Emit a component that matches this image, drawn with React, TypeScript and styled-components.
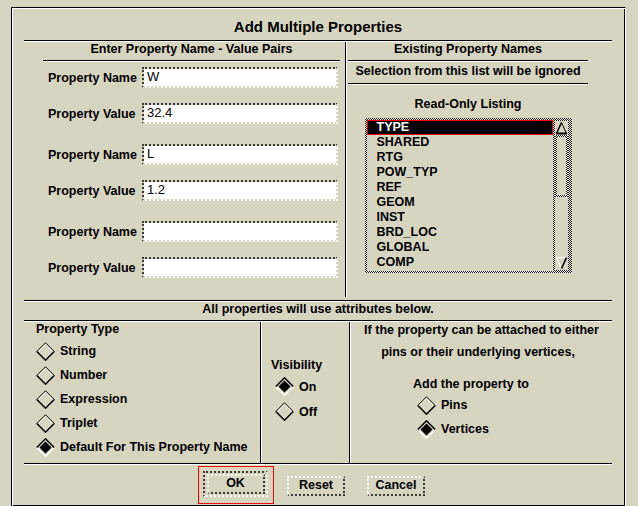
import React from "react";
import styled, { createGlobalStyle } from "styled-components";

const BG = "#d6d5c0";
const CHECKER = "repeating-conic-gradient(#1c1c1c 0 25%, #f4f4ec 0 50%) 0 0 / 2px 2px";

const Global = createGlobalStyle`
  html, body { margin: 0; padding: 0; background: ${BG}; }
  body {
    font-family: "Liberation Sans", Arial, Helvetica, sans-serif;
    color: #000;
    width: 638px;
    height: 506px;
    overflow: hidden;
  }
  * { box-sizing: border-box; }
`;

const Frame = styled.div`
  margin: 7px 0 0 11px;
  width: 615px;
  height: 500px;
  border-style: solid;
  border-width: 1px;
  border-color: #000 #fff #fff #000;
  box-shadow: inset 1px 1px 0 #fff, inset -1px -1px 0 #000;
  padding: 1px 13px 0 12px;
  display: flex;
  flex-direction: column;
`;

const Title = styled.div`
  height: 31px;
  padding-top: 9px;
  line-height: 18px;
  font-size: 15px;
  font-weight: bold;
  text-align: center;
`;

const Rule = styled.div`
  height: 2px;
  flex: none;
  border-top: 1px solid #000;
  border-bottom: 1px solid #fff;
`;

const TopSection = styled.div`
  display: flex;
  height: 258px;
`;

const LeftCol = styled.div`
  width: 321px;
  padding: 0 5px 0 19px;
  display: flex;
  flex-direction: column;
`;

const RightCol = styled.div`
  flex: 1;
  padding: 0 24px 0 1px;
  display: flex;
  flex-direction: column;
`;

const VDivider = styled.div<{ $bottomGap?: number }>`
  width: 2px;
  flex: none;
  border-left: 1px solid #000;
  border-right: 1px solid #fff;
  margin-bottom: ${(p) => p.$bottomGap ?? 0}px;
`;

const Heading = styled.div`
  height: 18px;
  line-height: 14px;
  font-size: 12.5px;
  font-weight: bold;
  text-align: center;
`;

const SubHeading = styled(Heading)`
  height: 21px;
  padding-top: 2px;
`;

const Form = styled.div`
  margin-top: 5px;
  padding-left: 5px;
  display: flex;
  flex-direction: column;
  gap: 20px;
`;

const Pair = styled.div`
  display: flex;
  flex-direction: column;
  gap: 15px;
`;

const FieldRow = styled.div`
  display: grid;
  grid-template-columns: 94px 196px;
  align-items: center;
  height: 21px;
`;

const Label = styled.span`
  font-size: 12.5px;
  font-weight: bold;
  white-space: nowrap;
`;

const TextInput = styled.input`
  width: 196px;
  height: 21px;
  margin: 0;
  border-style: dotted;
  border-width: 2px;
  border-color: #3a3a36 #fafaf4 #fafaf4 #3a3a36;
  background: #fff;
  background-clip: padding-box;
  padding: 0 0 2px 3px;
  font-family: "Liberation Sans", Arial, sans-serif;
  font-size: 13px;
  color: #000;
  outline: none;
`;

const ListingTitle = styled.div`
  margin-top: 12px;
  line-height: 14px;
  font-size: 12.5px;
  font-weight: bold;
  text-align: center;
`;

const ListBox = styled.div`
  margin: 7px auto 0;
  width: 207px;
  height: 155px;
  padding: 2px;
  background: ${CHECKER};
  display: flex;
`;

const Items = styled.div`
  flex: 1;
  background: ${BG};
  display: flex;
  flex-direction: column;
`;

const Item = styled.div<{ $selected?: boolean }>`
  height: 15px;
  line-height: 15px;
  padding-left: 10px;
  font-size: 12.5px;
  font-weight: bold;
  white-space: nowrap;
  background: ${(p) => (p.$selected ? "#000" : "transparent")};
  color: ${(p) => (p.$selected ? "#fff" : "#000")};
  box-shadow: ${(p) => (p.$selected ? "inset 0 0 0 1px #f00" : "none")};
`;

const ScrollBar = styled.div`
  width: 17px;
  flex: none;
  padding: 1px 2px;
  background: ${CHECKER};
  display: flex;
`;

const Trough = styled.div`
  flex: 1;
  background: ${BG};
  display: flex;
  flex-direction: column;
`;

const Arrow = styled.svg`
  display: block;
  flex: none;
`;

const Slider = styled.div`
  height: 62px;
  flex: none;
  padding: 2px;
  background: ${CHECKER};
  &::after {
    content: "";
    display: block;
    height: 100%;
    background: ${BG};
  }
`;

const Spacer = styled.div`
  flex: 1;
`;

const Notice = styled.div`
  height: 18px;
  line-height: 14px;
  font-size: 12.5px;
  font-weight: bold;
  text-align: center;
`;

const BottomSection = styled.div`
  display: flex;
  height: 141px;
`;

const TypeCol = styled.div`
  width: 236px;
  padding-left: 12px;
`;

const VisCol = styled.div`
  width: 87px;
  padding: 36px 0 0 9px;
`;

const AttachCol = styled.div`
  flex: 1;
`;

const GroupLabel = styled.div`
  line-height: 14px;
  font-size: 12.5px;
  font-weight: bold;
  white-space: nowrap;
`;

const RadioList = styled.div<{ $top: number; $indent?: number }>`
  margin-top: ${(p) => p.$top}px;
  margin-left: ${(p) => p.$indent ?? 0}px;
  display: flex;
  flex-direction: column;
`;

const RadioRow = styled.div<{ $h: number }>`
  height: ${(p) => p.$h}px;
  display: flex;
  align-items: center;
  gap: 5px;
  font-size: 12.5px;
  font-weight: bold;
  white-space: nowrap;
`;

const CenterLine = styled.div<{ $top?: number }>`
  margin-top: ${(p) => p.$top ?? 0}px;
  line-height: 16px;
  font-size: 12.5px;
  font-weight: bold;
  text-align: center;
  white-space: nowrap;
`;

const AddBlock = styled.div`
  margin: 17px 0 0 62px;
`;

const ButtonRow = styled.div`
  height: 40px;
  display: flex;
  align-items: flex-start;
  padding: 1px 0 0 174px;
`;

const FocusRing = styled.div`
  width: 76px;
  height: 38px;
  border: 1px solid #f00;
  padding: 4px;
`;

const DefaultFrame = styled.div`
  width: 65px;
  height: 26px;
  border-style: dotted;
  border-width: 2px;
  border-color: #3a3a36 #fafaf4 #fafaf4 #3a3a36;
  display: flex;
  align-items: center;
  justify-content: center;
`;

const Button = styled.button<{ $left?: number; $top?: number }>`
  width: 58px;
  height: 20px;
  margin: ${(p) => p.$top ?? 0}px 0 0 ${(p) => p.$left ?? 0}px;
  padding: 0 0 2px;
  border-style: dotted;
  border-width: 2px;
  border-color: #fafaf4 #3a3a36 #3a3a36 #fafaf4;
  background: ${BG};
  background-clip: padding-box;
  font-family: "Liberation Sans", Arial, sans-serif;
  font-size: 12.5px;
  font-weight: bold;
  color: #000;
  line-height: 14px;
`;

const Diamond: React.FC<{ selected?: boolean }> = ({ selected }) => (
  <svg width="19" height="19" viewBox="0 0 19 19" style={{ flex: "none" }}>
    {selected ? (
      <>
        <polyline points="0.8,9.5 9.5,18.2 18.2,9.5" fill="none" stroke="#fff" strokeWidth="1.6" />
        <polyline points="0.8,9.5 9.5,0.8 18.2,9.5" fill="none" stroke="#000" strokeWidth="1.5" />
        <polygon points="9.5,3.5 15.5,9.5 9.5,15.5 3.5,9.5" fill="#000" />
      </>
    ) : (
      <>
        <polyline points="0.8,9.5 9.5,0.8 18.2,9.5" fill="none" stroke="#000" strokeWidth="1" />
        <polyline points="0.8,9.5 9.5,18.2 18.2,9.5" fill="none" stroke="#000" strokeWidth="1.5" />
        <polyline points="2.4,9.5 9.5,2.4 16.6,9.5" fill="none" stroke="#fff" strokeWidth="0.9" />
      </>
    )}
  </svg>
);

const Radio: React.FC<{ label: string; selected?: boolean; h: number }> = ({ label, selected, h }) => (
  <RadioRow $h={h}>
    <Diamond selected={selected} />
    <span>{label}</span>
  </RadioRow>
);

const pairs = [
  { name: "W", value: "32.4" },
  { name: "L", value: "1.2" },
  { name: "", value: "" },
];

const existing = ["TYPE", "SHARED", "RTG", "POW_TYP", "REF", "GEOM", "INST", "BRD_LOC", "GLOBAL", "COMP"];

const propertyTypes = ["String", "Number", "Expression", "Triplet", "Default For This Property Name"];

export default function App() {
  return (
    <>
      <Global />
      <Frame>
        <Title>Add Multiple Properties</Title>
        <Rule />
        <TopSection>
          <LeftCol>
            <Heading>Enter Property Name - Value Pairs</Heading>
            <Rule />
            <Form>
              {pairs.map((p, i) => (
                <Pair key={i}>
                  <FieldRow>
                    <Label>Property Name</Label>
                    <TextInput readOnly value={p.name} />
                  </FieldRow>
                  <FieldRow>
                    <Label>Property Value</Label>
                    <TextInput readOnly value={p.value} />
                  </FieldRow>
                </Pair>
              ))}
            </Form>
          </LeftCol>
          <VDivider $bottomGap={3} />
          <RightCol>
            <Heading>Existing Property Names</Heading>
            <Rule />
            <SubHeading>Selection from this list will be ignored</SubHeading>
            <Rule />
            <ListingTitle>Read-Only Listing</ListingTitle>
            <ListBox>
              <Items>
                {existing.map((n, i) => (
                  <Item key={n} $selected={i === 0}>
                    {n}
                  </Item>
                ))}
              </Items>
              <ScrollBar>
                <Trough>
                  <Arrow width="13" height="14" viewBox="0 0 13 14">
                    <polyline points="1.5,12.5 6.5,1.5" fill="none" stroke="#000" strokeWidth="1.6" />
                    <polyline points="6.5,1.5 11.5,12.5" fill="none" stroke="#000" strokeWidth="1" />
                    <line x1="1" y1="12.5" x2="12" y2="12.5" stroke="#000" strokeWidth="2" />
                  </Arrow>
                  <Slider />
                  <Spacer />
                  <Arrow width="13" height="14" viewBox="0 0 13 14">
                    <line x1="1" y1="1.5" x2="12" y2="1.5" stroke="#fff" strokeWidth="1.4" />
                    <polyline points="1.5,1.5 6.5,12.5" fill="none" stroke="#fff" strokeWidth="1.2" />
                    <polyline points="6.5,12.5 11.5,1.5" fill="none" stroke="#000" strokeWidth="1.6" />
                  </Arrow>
                </Trough>
              </ScrollBar>
            </ListBox>
          </RightCol>
        </TopSection>
        <Rule />
        <Notice>All properties will use attributes below.</Notice>
        <Rule />
        <BottomSection>
          <TypeCol>
            <GroupLabel>Property Type</GroupLabel>
            <RadioList $top={3}>
              {propertyTypes.map((t, i) => (
                <Radio key={t} label={t} h={24} selected={i === propertyTypes.length - 1} />
              ))}
            </RadioList>
          </TypeCol>
          <VDivider />
          <VisCol>
            <GroupLabel>Visibility</GroupLabel>
            <RadioList $top={2} $indent={4}>
              <Radio label="On" h={25} selected />
              <Radio label="Off" h={25} />
            </RadioList>
          </VisCol>
          <VDivider />
          <AttachCol>
            <CenterLine>If the property can be attached to either</CenterLine>
            <CenterLine $top={6}>pins or their underlying vertices,&nbsp;&nbsp;</CenterLine>
            <AddBlock>
              <GroupLabel>Add the property to</GroupLabel>
              <RadioList $top={2} $indent={4}>
                <Radio label="Pins" h={24} />
                <Radio label="Vertices" h={24} selected />
              </RadioList>
            </AddBlock>
          </AttachCol>
        </BottomSection>
        <Rule />
        <ButtonRow>
          <FocusRing>
            <DefaultFrame>
              <Button>OK</Button>
            </DefaultFrame>
          </FocusRing>
          <Button $left={13} $top={10}>Reset</Button>
          <Button $left={22} $top={10}>Cancel</Button>
        </ButtonRow>
      </Frame>
    </>
  );
}
